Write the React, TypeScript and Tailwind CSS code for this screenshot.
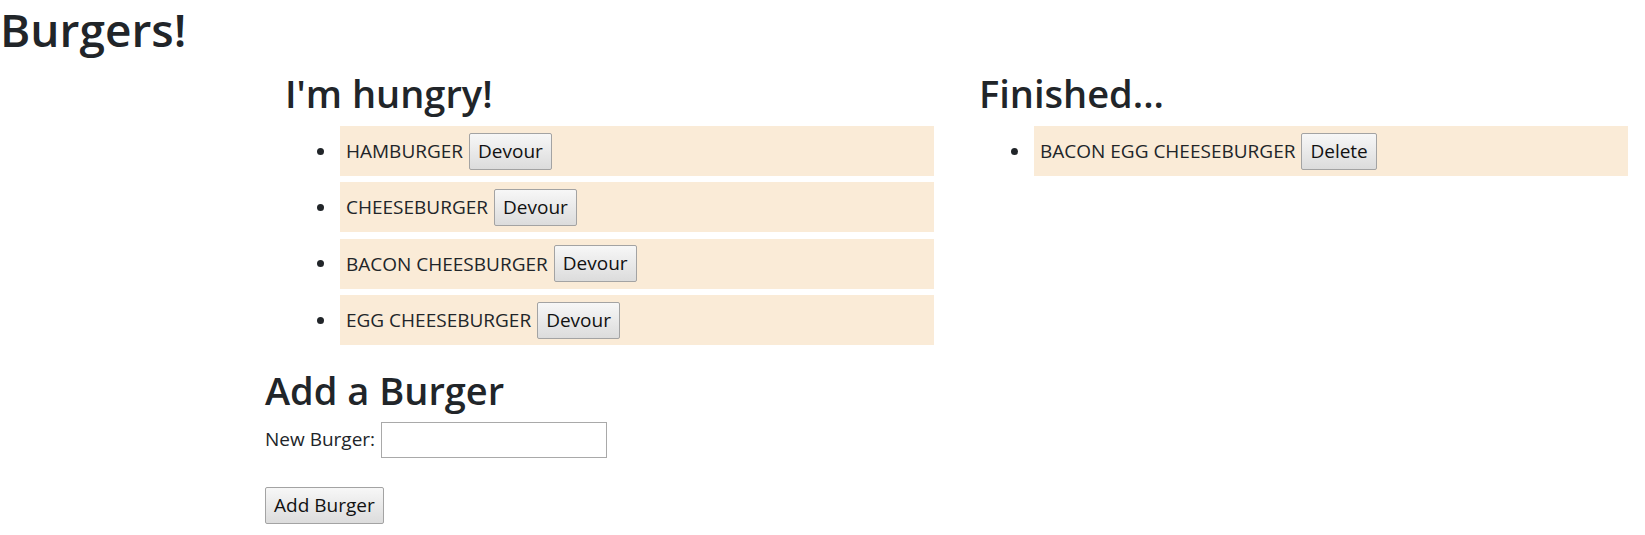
import React from 'react';

type Burger = {
  id: number;
  name: string;
};

const hungry: Burger[] = [
  { id: 1, name: 'HAMBURGER' },
  { id: 2, name: 'CHEESEBURGER' },
  { id: 3, name: 'BACON CHEESBURGER' },
  { id: 4, name: 'EGG CHEESEBURGER' },
];

const finished: Burger[] = [{ id: 5, name: 'BACON EGG CHEESEBURGER' }];

const btn =
  'h-[37px] px-[8px] rounded-[2px] border border-[#a3a3a3] bg-gradient-to-b from-[#f7f7f7] to-[#dcdcdc] text-[19px] leading-none text-[#111]';

const BurgerRow: React.FC<{ burger: Burger; action: string }> = ({ burger, action }) => (
  <li className="flex items-center mb-[6.33px]">
    {/* bullet */}
    <span className="w-[55px] shrink-0 pl-[32px]">
      <span className="block w-[7px] h-[7px] rounded-full bg-[#212529]" />
    </span>
    <div className="flex-1 h-[50px] flex items-center gap-[6px] pl-[6px] bg-[#faebd7]">
      <span>{burger.name}</span>
      <button type="button" className={btn}>
        {action}
      </button>
    </div>
  </li>
);

export default function App() {
  return (
    <div className="min-h-screen bg-white text-[#212529] text-[19px] leading-[1.5] font-['Open_Sans','Noto_Sans',sans-serif]">
      <h1 className="text-[46px] leading-[58px] font-semibold mb-[12.5px]">Burgers!</h1>

      <div className="pl-[265px]">
        <div className="flex gap-[45px] pl-[20px]">
          {/* Left - not yet eaten */}
          <div className="w-[649px]">
            <h2 className="text-[38px] leading-[1.2] font-semibold mb-[10px]">I'm hungry!</h2>
            <ul className="mb-[23px]">
              {hungry.map((b) => (
                <BurgerRow key={b.id} burger={b} action="Devour" />
              ))}
            </ul>
          </div>
          {/* Right - devoured */}
          <div className="w-[649px]">
            <h2 className="text-[38px] leading-[1.2] font-semibold mb-[10px]">Finished...</h2>
            <ul>
              {finished.map((b) => (
                <BurgerRow key={b.id} burger={b} action="Delete" />
              ))}
            </ul>
          </div>
        </div>

        {/* Add form */}
        <h2 className="text-[38px] leading-[1.2] font-semibold mb-[8px]">Add a Burger</h2>
        <form>
          <div className="flex items-center gap-[6px]">
            <label htmlFor="burger">New Burger:</label>
            <input id="burger" type="text" className="w-[226px] h-[36px] border border-[#a9a9a9] bg-white px-1" />
          </div>
          <div className="mt-[29px]">
            <button type="submit" className={`${btn} h-[35px]`}>
              Add Burger
            </button>
          </div>
        </form>
      </div>
    </div>
  );
}
